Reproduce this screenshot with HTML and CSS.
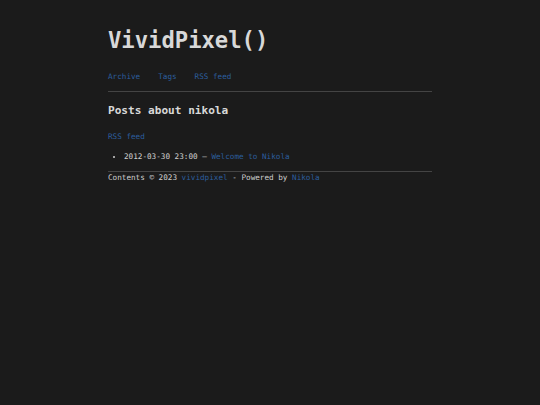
FILE: index.html
```html
<!DOCTYPE html>
<html>
<head>
<meta charset="utf-8">
<link rel="stylesheet" href="styles.css">
</head>
<body>
<div class="page">
  <header class="header">
    <h1 class="title">VividPixel()</h1>
    <nav class="nav">
      <a href="#">Archive</a>
      <a href="#">Tags</a>
      <a href="#">RSS feed</a>
    </nav>
  </header>
  <main class="main">
    <h2 class="heading">Posts about nikola</h2>
    <p class="feed"><a href="#">RSS feed</a></p>
    <ul class="posts">
      <li>2012-03-30 23:00 — <a href="#">Welcome to Nikola</a></li>
    </ul>
  </main>
  <footer class="footer">Contents © 2023 <a href="#">vividpixel</a> - Powered by <a href="#">Nikola</a></footer>
</div>
</body>
</html>
```
FILE: styles.css
```css
html, body {
  margin: 0;
  padding: 0;
  background: #1b1b1b;
}
body {
  font-family: "DejaVu Sans Mono", monospace;
  font-size: 7.65px;
  color: #cfcfcf;
}
a {
  color: #2c5e9e;
  text-decoration: none;
}
.page {
  width: 324px;
  margin: 0 auto;
  padding-top: 24px;
}
.title {
  margin: 0;
  font-size: 22.2px;
  font-weight: bold;
  color: #d8d8d8;
  line-height: 32px;
}
.nav {
  display: flex;
  gap: 18px;
  margin-top: 15px;
  padding-bottom: 9px;
  border-bottom: 1px solid #444;
  line-height: 11px;
}
.heading {
  margin: 10px 0 0;
  font-size: 11.1px;
  font-weight: bold;
  color: #d8d8d8;
  line-height: 18px;
}
.feed {
  margin: 11px 0 0;
  line-height: 11px;
}
.posts {
  margin: 9px 0 0;
  padding-left: 16px;
  line-height: 11px;
}
.footer {
  margin-top: 9px;
  border-top: 1px solid #444;
  line-height: 11px;
}
```
